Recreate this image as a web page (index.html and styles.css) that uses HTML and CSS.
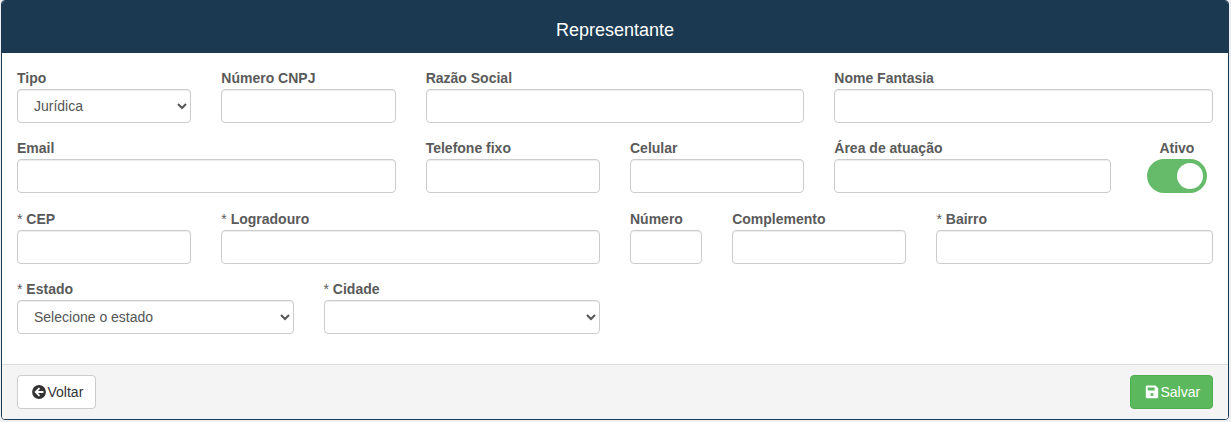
FILE: index.html
```html
<!DOCTYPE html>
<html lang="pt-BR">
<head>
<meta charset="utf-8">
<title>Representante</title>
<link rel="stylesheet" href="styles.css">
</head>
<body>
<form class="panel">
  <header class="panel-heading"><h1 class="panel-title">Representante</h1></header>
  <div class="panel-body">
    <div class="row">
      <div class="field col-2"><label class="label" for="tipo">Tipo</label><select class="control" id="tipo"><option>Jurídica</option></select></div>
      <div class="field col-2"><label class="label" for="cnpj">Número CNPJ</label><input class="control" id="cnpj"></div>
      <div class="field col-4"><label class="label" for="razao">Razão Social</label><input class="control" id="razao"></div>
      <div class="field col-4"><label class="label" for="fantasia">Nome Fantasia</label><input class="control" id="fantasia"></div>
    </div>
    <div class="row">
      <div class="field col-4"><label class="label" for="email">Email</label><input class="control" id="email"></div>
      <div class="field col-2"><label class="label" for="fixo">Telefone fixo</label><input class="control" id="fixo"></div>
      <div class="field col-2"><label class="label" for="celular">Celular</label><input class="control" id="celular"></div>
      <div class="field col-3"><label class="label" for="area">Área de atuação</label><input class="control" id="area"></div>
      <div class="field col-1 field-switch"><span class="label">Ativo</span><span class="switch"><span class="switch-knob"></span></span></div>
    </div>
    <div class="row">
      <div class="field col-2"><label class="label" for="cep"><span class="required">*</span> CEP</label><input class="control" id="cep"></div>
      <div class="field col-4"><label class="label" for="logradouro"><span class="required">*</span> Logradouro</label><input class="control" id="logradouro"></div>
      <div class="field col-1"><label class="label" for="numero">Número</label><input class="control" id="numero"></div>
      <div class="field col-2"><label class="label" for="complemento">Complemento</label><input class="control" id="complemento"></div>
      <div class="field col-3"><label class="label" for="bairro"><span class="required">*</span> Bairro</label><input class="control" id="bairro"></div>
    </div>
    <div class="row">
      <div class="field col-3"><label class="label" for="estado"><span class="required">*</span> Estado</label><select class="control" id="estado"><option>Selecione o estado</option></select></div>
      <div class="field col-3"><label class="label" for="cidade"><span class="required">*</span> Cidade</label><select class="control" id="cidade"><option></option></select></div>
    </div>
  </div>
  <footer class="panel-footer">
    <button class="btn btn-default" type="button"><svg class="icon" viewBox="0 0 14 14"><circle cx="7" cy="7" r="6.9" fill="currentColor"/><path d="M7.5 3.2 3.7 7l3.8 3.8M4 7h7.4" fill="none" stroke="#fff" stroke-width="1.8"/></svg>Voltar</button>
    <button class="btn btn-success" type="button"><svg class="icon" viewBox="0 0 14 14"><path fill="currentColor" fill-rule="evenodd" d="M2 .5h8.4L13.2 3.3V12a1.2 1.2 0 0 1-1.2 1.2H2A1.2 1.2 0 0 1 .8 12V1.7A1.2 1.2 0 0 1 2 .5ZM2.7 2.4v3.2h6.9V2.4ZM7 7.9a1.6 1.6 0 1 0 0 3.2 1.6 1.6 0 0 0 0-3.2Z"/></svg>Salvar</button>
  </footer>
</form>
</body>
</html>
```
FILE: styles.css
```css
* { box-sizing: border-box; }
body {
  margin: 0;
  padding: 0 2px 0 1px;
  background: #eeeff2;
  color: #5a5a5a;
  font: 14px/20px "Liberation Sans", Arial, sans-serif;
}
.panel {
  height: 420px;
  display: flex;
  flex-direction: column;
  border: 1px solid #1b3a52;
  border-radius: 4px;
  background: #fff;
  overflow: hidden;
}
.panel-heading {
  height: 52px;
  padding-top: 19px;
  background: #1b3a52;
  color: #fff;
  text-align: center;
}
.panel-title { margin: 0; font-size: 18px; font-weight: 400; line-height: 20px; }
.panel-body { flex: 1; padding-top: 15px; }
.row { display: flex; height: 70.3px; }
.field { flex: none; padding: 0 15px; }
.col-1 { width: 8.33333333%; }
.col-2 { width: 16.66666667%; }
.col-3 { width: 25%; }
.col-4 { width: 33.33333333%; }
.label { display: block; height: 21px; font-weight: 700; white-space: nowrap; }
.required { font-weight: 400; }
.control {
  display: block;
  width: 100%;
  height: 34px;
  padding: 6px 12px;
  border: 1px solid #ccc;
  border-radius: 4px;
  background: #fff;
  box-shadow: inset 0 1px 1px rgba(0, 0, 0, .075);
  color: #555;
  font: inherit;
}
.field-switch { display: flex; flex-direction: column; align-items: center; }
.switch {
  display: flex;
  justify-content: flex-end;
  width: 60px;
  height: 34px;
  padding: 4px;
  border-radius: 17px;
  background: #66bb6a;
}
.switch-knob { width: 26px; height: 26px; border-radius: 50%; background: #fff; }
.panel-footer {
  display: flex;
  justify-content: space-between;
  height: 55px;
  padding: 10px 15px;
  border-top: 1px solid #ddd;
  background: #f4f4f4;
}
.btn {
  display: flex;
  align-items: center;
  height: 34px;
  padding: 0 0 0 14px;
  border: 1px solid #ccc;
  border-radius: 4px;
  font: inherit;
}
.btn-default { width: 79px; background: #fff; color: #333; }
.btn-success { width: 83px; border-color: #4cae4c; background: #5cb85c; color: #fff; }
.icon { flex: none; width: 14px; height: 14px; margin-right: 1.5px; }
```
